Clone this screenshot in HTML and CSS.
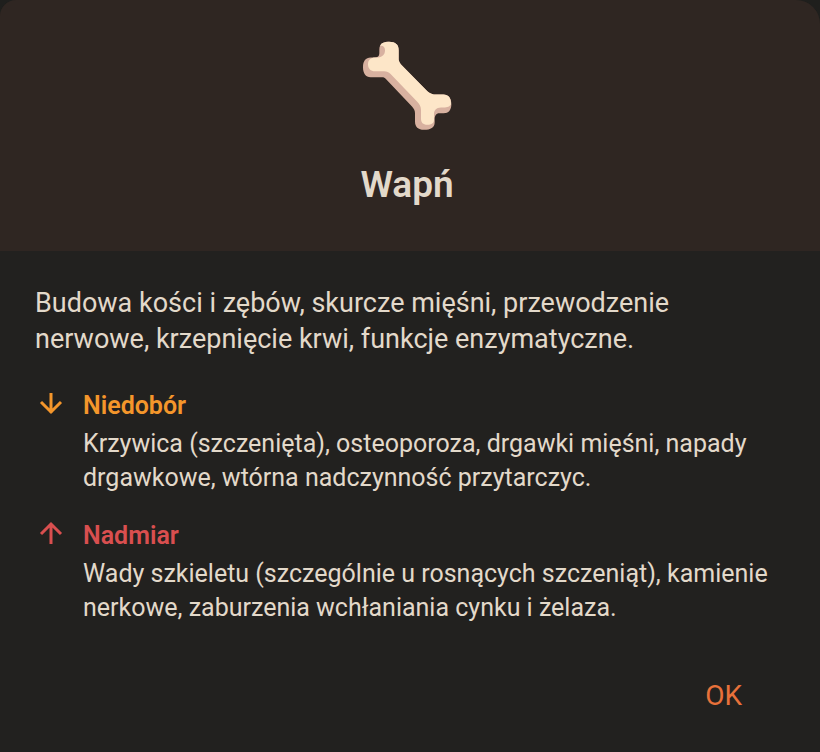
FILE: index.html
```html
<!DOCTYPE html>
<html lang="pl">
    <head>
        <meta charset="UTF-8">
        <meta name="viewport" content="width=device-width, initial-scale=1.0">
        <title>Wapń</title>
        <link rel="stylesheet" href="styles.css">
    </head>
    <body>
        <div class="dialog" role="dialog" aria-labelledby="title">
            <div class="header">
                <svg class="bone" viewBox="36 30 270 272" aria-hidden="true">
                    <path class="bone-shade" d="M88 58C88 42 99 35 117 35C137 35 146 44 146 60V88C147 96 151 101 156 106L232 183C240 190 248 193 259 193H280C296 193 304 204 304 222C304 239 296 249 281 249H268C258 249 254 257 254 267V277C254 292 242 299 222 299C204 299 195 290 195 274V250C195 242 192 236 186 229L107 146C103 142 101 141 96 141H62C47 141 39 129 39 111C39 93 47 82 62 82H74C83 82 88 78 88 69Z"/>
                    <path class="bone-light" d="M90 47C94 38 103 35 117 35C137 35 146 44 146 60V88C147 96 151 101 156 106L232 183C240 190 248 193 259 193H280C296 193 303 204 303 222C301 228 291 232 281 232H273C258 232 252 241 252 252V268C252 279 245 284 232 284C219 284 213 277 213 266V240C213 230 209 222 201 214L121 131C116 126 111 123 102 123H75C62 123 54 115 54 102C54 89 63 82 76 82H84C98 80 105 73 105 60C105 50 99 45 90 47Z"/>
                </svg>
                <h1 class="title" id="title">Wapń</h1>
            </div>
            <div class="content">
                <p class="about">Budowa kości i zębów, skurcze mięśni, przewodzenie nerwowe, krzepnięcie krwi, funkcje enzymatyczne.</p>
                <div class="effect low">
                    <svg class="arrow" viewBox="0 0 32 32" aria-hidden="true">
                        <path d="M16 4V24M6 13L16 23L26 13"/>
                    </svg>
                    <div class="text">
                        <h2>Niedobór</h2>
                        <p>Krzywica (szczenięta), osteoporoza, drgawki mięśni, napady drgawkowe, wtórna nadczynność przytarczyc.</p>
                    </div>
                </div>
                <div class="effect high">
                    <svg class="arrow" viewBox="0 0 32 32" aria-hidden="true">
                        <path d="M16 25V5M6 15L16 5L26 15"/>
                    </svg>
                    <div class="text">
                        <h2>Nadmiar</h2>
                        <p>Wady szkieletu (szczególnie u rosnących szczeniąt), kamienie nerkowe, zaburzenia wchłaniania cynku i żelaza.</p>
                    </div>
                </div>
            </div>
            <div class="actions">
                <button class="ok" type="button">OK</button>
            </div>
        </div>
    </body>
</html>
```
FILE: styles.css
```css
*{
    margin: 0;
    padding: 0;
    box-sizing: border-box;
}
body{
    background-color: #1f1f1d;
    color: #e3d9ca;
    font-family: Roboto, sans-serif;
}
.dialog{
    min-height: 100vh;
    background-color: #22211f;
    border-radius: 16px 24px 0 0;
    overflow: hidden;
}
.header{
    display: flex;
    flex-direction: column;
    align-items: center;
    gap: 32px;
    padding: 40px 6px 44px 0;
    background-color: #2f2622;
}
.bone{
    width: 90px;
    height: 91px;
}
.bone-shade{
    fill: #d8b1a0;
}
.bone-light{
    fill: #fde6c8;
}
.title{
    font-size: 37px;
    line-height: 44px;
    font-weight: 600;
}
.content{
    padding: 34px 40px 0 35px;
}
.about{
    font-size: 27px;
    line-height: 36px;
    margin-bottom: 32px;
}
.effect{
    display: flex;
    gap: 16px;
    margin-bottom: 24px;
}
.arrow{
    flex: none;
    width: 32px;
    height: 32px;
    fill: none;
    stroke: currentColor;
    stroke-width: 3;
}
.text p{
    margin-top: 4px;
    font-size: 25px;
    line-height: 34px;
    color: #e3d9ca;
}
.text h2{
    font-size: 25px;
    line-height: 34px;
    font-weight: 600;
}
.low{
    color: #f4962b;
}
.high{
    color: #d94f4f;
}
.actions{
    display: flex;
    justify-content: flex-end;
    padding: 23px 54px 16px;
}
.ok{
    padding: 8px 24px;
    border: 0;
    background: none;
    color: #e8713a;
    font-family: inherit;
    font-size: 28px;
    line-height: 32px;
}
```
